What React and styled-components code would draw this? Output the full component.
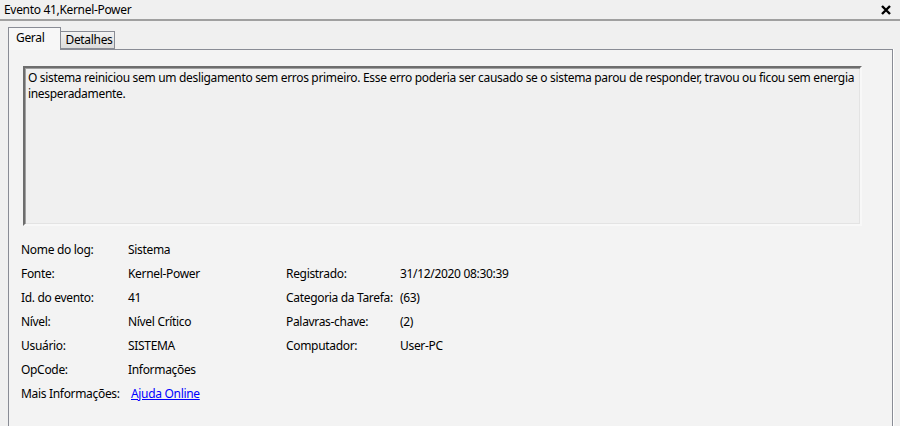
import React from "react";
import styled, { createGlobalStyle } from "styled-components";

const GlobalStyle = createGlobalStyle`
  html, body {
    margin: 0;
    padding: 0;
    background: #f0f0f0;
  }
  body {
    font-family: "Noto Sans", "Open Sans", "Liberation Sans", sans-serif;
    font-size: 12px;
    letter-spacing: -0.32px;
    color: #000;
  }
`;

const Window = styled.div`
  width: 900px;
  height: 426px;
  overflow: hidden;
  display: flex;
  flex-direction: column;
  background: #f0f0f0;
`;

const TitleBar = styled.div`
  height: 19px;
  border-bottom: 2px solid #a0a0a0;
  display: flex;
  align-items: center;
  justify-content: space-between;
  padding: 0 9px 0 4px;
`;

const Title = styled.span`
  line-height: 19px;
`;

const CloseButton = styled.button`
  border: none;
  background: none;
  padding: 0;
  width: 10px;
  height: 10px;
  display: flex;
  cursor: pointer;
`;

const TabStrip = styled.div`
  display: flex;
  align-items: flex-end;
  margin-top: 6px;
  padding-left: 8px;
  position: relative;
  z-index: 1;
`;

const Tab = styled.div`
  box-sizing: border-box;
  border: 1px solid #898c95;
  border-bottom: ${(p) => (p.$active ? "none" : "1px solid #898c95")};
  margin-bottom: ${(p) => (p.$active ? "-1px" : "0")};
  margin-left: ${(p) => (p.$active ? "0" : "-1px")};
  height: ${(p) => (p.$active ? "23px" : "18px")};
  padding: ${(p) => (p.$active ? "0 16px 0 7px" : "0 1px 0 4px")};
  background: ${(p) =>
    p.$active ? "#f7f7f7" : "linear-gradient(#f2f2f2, #dcdcdc)"};
  display: flex;
  align-items: center;
  line-height: 16px;
  padding-bottom: ${(p) => (p.$active ? "2px" : "0")};
`;

const Panel = styled.div`
  flex: 1;
  margin: 0 7px 0 8px;
  border: 1px solid #898c95;
  border-bottom: none;
  background: #f3f3f3;
  padding: 16px 30px 0 14px;
  box-shadow: 1px 0 0 #ffffff;
`;

const Description = styled.div`
  box-sizing: border-box;
  height: 160px;
  border-style: solid;
  border-width: 2px;
  border-color: #6d6d6d #f8f8f8 #f8f8f8 #6d6d6d;
  box-shadow: inset 1px 1px 0 #a0a0a0, inset -1px -1px 0 #e3e3e3;
  background: #f0f0f0;
  padding: 2px 3px;
  line-height: 16px;
`;

const Fields = styled.div`
  display: grid;
  grid-template-columns: 107px 158px 114px 1fr;
  grid-auto-rows: 24px;
  align-items: center;
  margin: 11px 0 0 -2px;
`;

const Label = styled.span`
  white-space: nowrap;
`;

const Value = styled.span`
  white-space: nowrap;
`;

const Link = styled.a`
  color: #0000ff;
  text-decoration: underline;
  margin-left: 3px;
  cursor: pointer;
`;

const rows = [
  ["Nome do log:", "Sistema", "", ""],
  ["Fonte:", "Kernel-Power", "Registrado:", "31/12/2020 08:30:39"],
  ["Id. do evento:", "41", "Categoria da Tarefa:", "(63)"],
  ["Nível:", "Nível Crítico", "Palavras-chave:", "(2)"],
  ["Usuário:", "SISTEMA", "Computador:", "User-PC"],
  ["OpCode:", "Informações", "", ""],
];

const App = () => {
  return (
    <Window>
      <GlobalStyle />
      <TitleBar>
        <Title>Evento 41,Kernel-Power</Title>
        <CloseButton aria-label="Fechar">
          <svg width="10" height="10" viewBox="0 0 10 10">
            <path d="M1 1 L9 9 M9 1 L1 9" stroke="#000" strokeWidth="2.4" />
          </svg>
        </CloseButton>
      </TitleBar>

      <TabStrip>
        <Tab $active>Geral</Tab>
        <Tab>Detalhes</Tab>
      </TabStrip>

      <Panel>
        <Description>
          O sistema reiniciou sem um desligamento sem erros primeiro. Esse erro
          poderia ser causado se o sistema parou de responder, travou ou ficou
          sem energia inesperadamente.
        </Description>

        <Fields>
          {rows.map((r, i) => (
            <React.Fragment key={i}>
              <Label>{r[0]}</Label>
              <Value>{r[1]}</Value>
              <Label>{r[2]}</Label>
              <Value>{r[3]}</Value>
            </React.Fragment>
          ))}
          <Label>Mais Informações:</Label>
          <Value>
            <Link>Ajuda Online</Link>
          </Value>
        </Fields>
      </Panel>
    </Window>
  );
};

export default App;
